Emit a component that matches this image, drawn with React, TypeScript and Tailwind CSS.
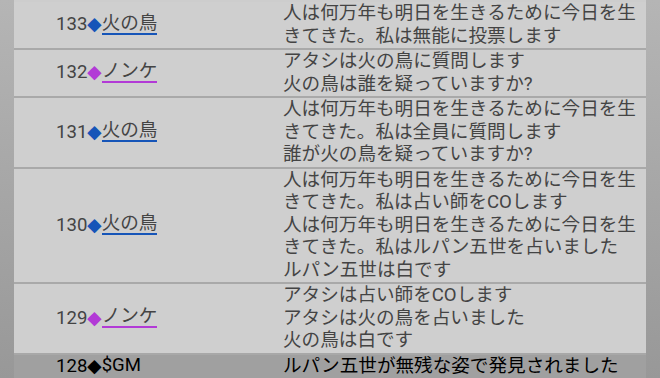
import React from 'react';

type Row = {
    no: number;
    name: string;
    tone: 'blue' | 'purple' | 'gm';
    lines: string[];
};

const rows: Row[] = [
    {
        no: 133,
        name: '火の鳥',
        tone: 'blue',
        lines: ['人は何万年も明日を生きるために今日を生', 'きてきた。私は無能に投票します'],
    },
    {
        no: 132,
        name: 'ノンケ',
        tone: 'purple',
        lines: ['アタシは火の鳥に質問します', '火の鳥は誰を疑っていますか?'],
    },
    {
        no: 131,
        name: '火の鳥',
        tone: 'blue',
        lines: ['人は何万年も明日を生きるために今日を生', 'きてきた。私は全員に質問します', '誰が火の鳥を疑っていますか?'],
    },
    {
        no: 130,
        name: '火の鳥',
        tone: 'blue',
        lines: [
            '人は何万年も明日を生きるために今日を生',
            'きてきた。私は占い師をCOします',
            '人は何万年も明日を生きるために今日を生',
            'きてきた。私はルパン五世を占いました',
            'ルパン五世は白です',
        ],
    },
    {
        no: 129,
        name: 'ノンケ',
        tone: 'purple',
        lines: ['アタシは占い師をCOします', 'アタシは火の鳥を占いました', '火の鳥は白です'],
    },
    {
        no: 128,
        name: '$GM',
        tone: 'gm',
        lines: ['ルパン五世が無残な姿で発見されました'],
    },
];

const diamondColor = {
    blue: 'text-[#1655b8]',
    purple: 'text-[#b23ad6]',
    gm: 'text-black',
};

const underline = {
    blue: 'border-b-2 border-[#1655b8]',
    purple: 'border-b-2 border-[#b23ad6]',
    gm: '',
};

const LogRow = ({ row }: { row: Row }) => {
    const gm = row.tone === 'gm';
    return (
        <div
            className={`grid grid-cols-[269px_1fr] border-t-2 pb-px first:border-t-[#cdcdcd] ${
                gm ? 'bg-[#a0a0a0] border-[#a8a8a8] text-black' : 'bg-[#cfcfcf] border-[#a9a9a9] text-[#444]'
            }`}
        >
            <div className="flex items-center pl-[42px]">
                <span>{row.no}</span>
                <span className={`font-['DejaVu_Sans'] ${diamondColor[row.tone]}`}>◆</span>
                <span className={`inline-block leading-none ${underline[row.tone]}`}>{row.name}</span>
            </div>
            <div className="flex flex-col">
                {row.lines.map((line, i) => (
                    <span key={i} className="whitespace-nowrap">
                        {line}
                    </span>
                ))}
            </div>
        </div>
    );
};

export default function App() {
    return (
        <div className="w-[660px] h-[378px] overflow-hidden bg-gradient-to-b from-[#b5b5b5] to-[#989898] px-[14px] font-['Roboto','Noto_Sans_CJK_JP',sans-serif] text-[18.6px] leading-[22.5px]">
            <div className="w-[632px]">
                {rows.map((row) => (
                    <LogRow key={row.no} row={row} />
                ))}
            </div>
        </div>
    );
}
